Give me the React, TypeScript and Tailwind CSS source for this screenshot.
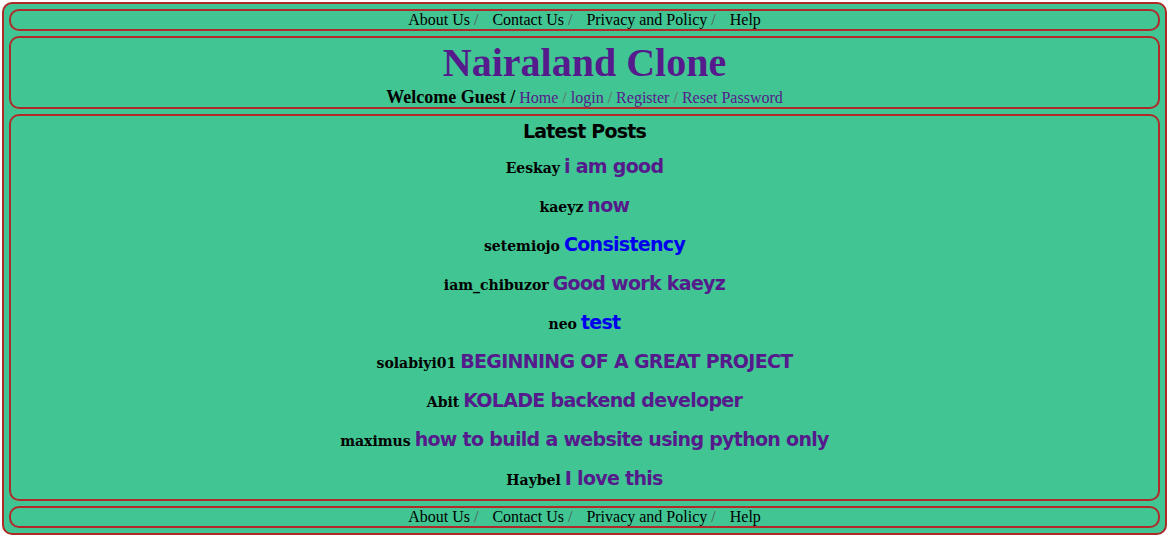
const navLinks = ["About Us", "Contact Us", "Privacy and Policy", "Help"];

const posts = [
  { user: "Eeskay", title: "i am good", visited: true },
  { user: "kaeyz", title: "now", visited: true },
  { user: "setemiojo", title: "Consistency", visited: false },
  { user: "iam_chibuzor", title: "Good work kaeyz", visited: true },
  { user: "neo", title: "test", visited: false },
  { user: "solabiyi01", title: "BEGINNING OF A GREAT PROJECT", visited: true },
  { user: "Abit", title: "KOLADE backend developer", visited: true },
  { user: "maximus", title: "how to build a website using python only", visited: true },
  { user: "Haybel", title: "I love this", visited: true },
];

const NavBar = () => (
  <div className="h-[22px] border-2 border-[#b02a2a] rounded-[10px] flex justify-center items-center text-[16px] leading-[18px] text-black">
    {navLinks.map((link, i) => (
      <span key={link} className={i < navLinks.length - 1 ? "mr-[14px]" : ""}>
        <a href="#">{link}</a>
        {i < navLinks.length - 1 && <span className="text-[#555]"> /</span>}
      </span>
    ))}
  </div>
);

const Header = () => {
  const links = ["Home", "login", "Register", "Reset Password"];
  return (
    <div className="h-[73px] border-2 border-[#b02a2a] rounded-[10px] flex flex-col items-center">
      <h1 className="mt-[2px] text-[40px] leading-[46px] font-bold text-[#551a8b]">Nairaland Clone</h1>
      <div className="leading-[21px] mt-[1px]">
        <b className="text-[18px] text-black">Welcome Guest /</b>{" "}
        {links.map((l, i) => (
          <span key={l} className="text-[16px]">
            <a href="#" className="text-[#551a8b]">{l}</a>
            {i < links.length - 1 && <span className="text-[#666]"> / </span>}
          </span>
        ))}
      </div>
    </div>
  );
};

const LatestPosts = () => (
  <div className="h-[387px] border-2 border-[#b02a2a] rounded-[10px] flex flex-col">
    <h2 className="h-[31px] leading-[31px] text-center text-[19px] font-bold tracking-[-0.8px] text-black font-['DejaVu_Sans',sans-serif]">
      Latest Posts
    </h2>
    {posts.map((p) => (
      <div key={p.user} className="h-[39px] leading-[39px] text-center whitespace-nowrap">
        <b className="text-[14px] text-black font-['DejaVu_Serif',serif]">{p.user}</b>{" "}
        <a
          href="#"
          className={`text-[19px] font-bold tracking-[-0.7px] font-['DejaVu_Sans',sans-serif] ${
            p.visited ? "text-[#551a8b]" : "text-[#0000ee]"
          }`}
        >
          {p.title}
        </a>
      </div>
    ))}
  </div>
);

export default function App() {
  return (
    <div className="m-[2px] border-2 border-[#b02a2a] rounded-[10px] bg-[#41c592] p-[5px] flex flex-col gap-[5px] font-['Liberation_Serif',serif]">
      <NavBar />
      <Header />
      <LatestPosts />
      <NavBar />
    </div>
  );
}
